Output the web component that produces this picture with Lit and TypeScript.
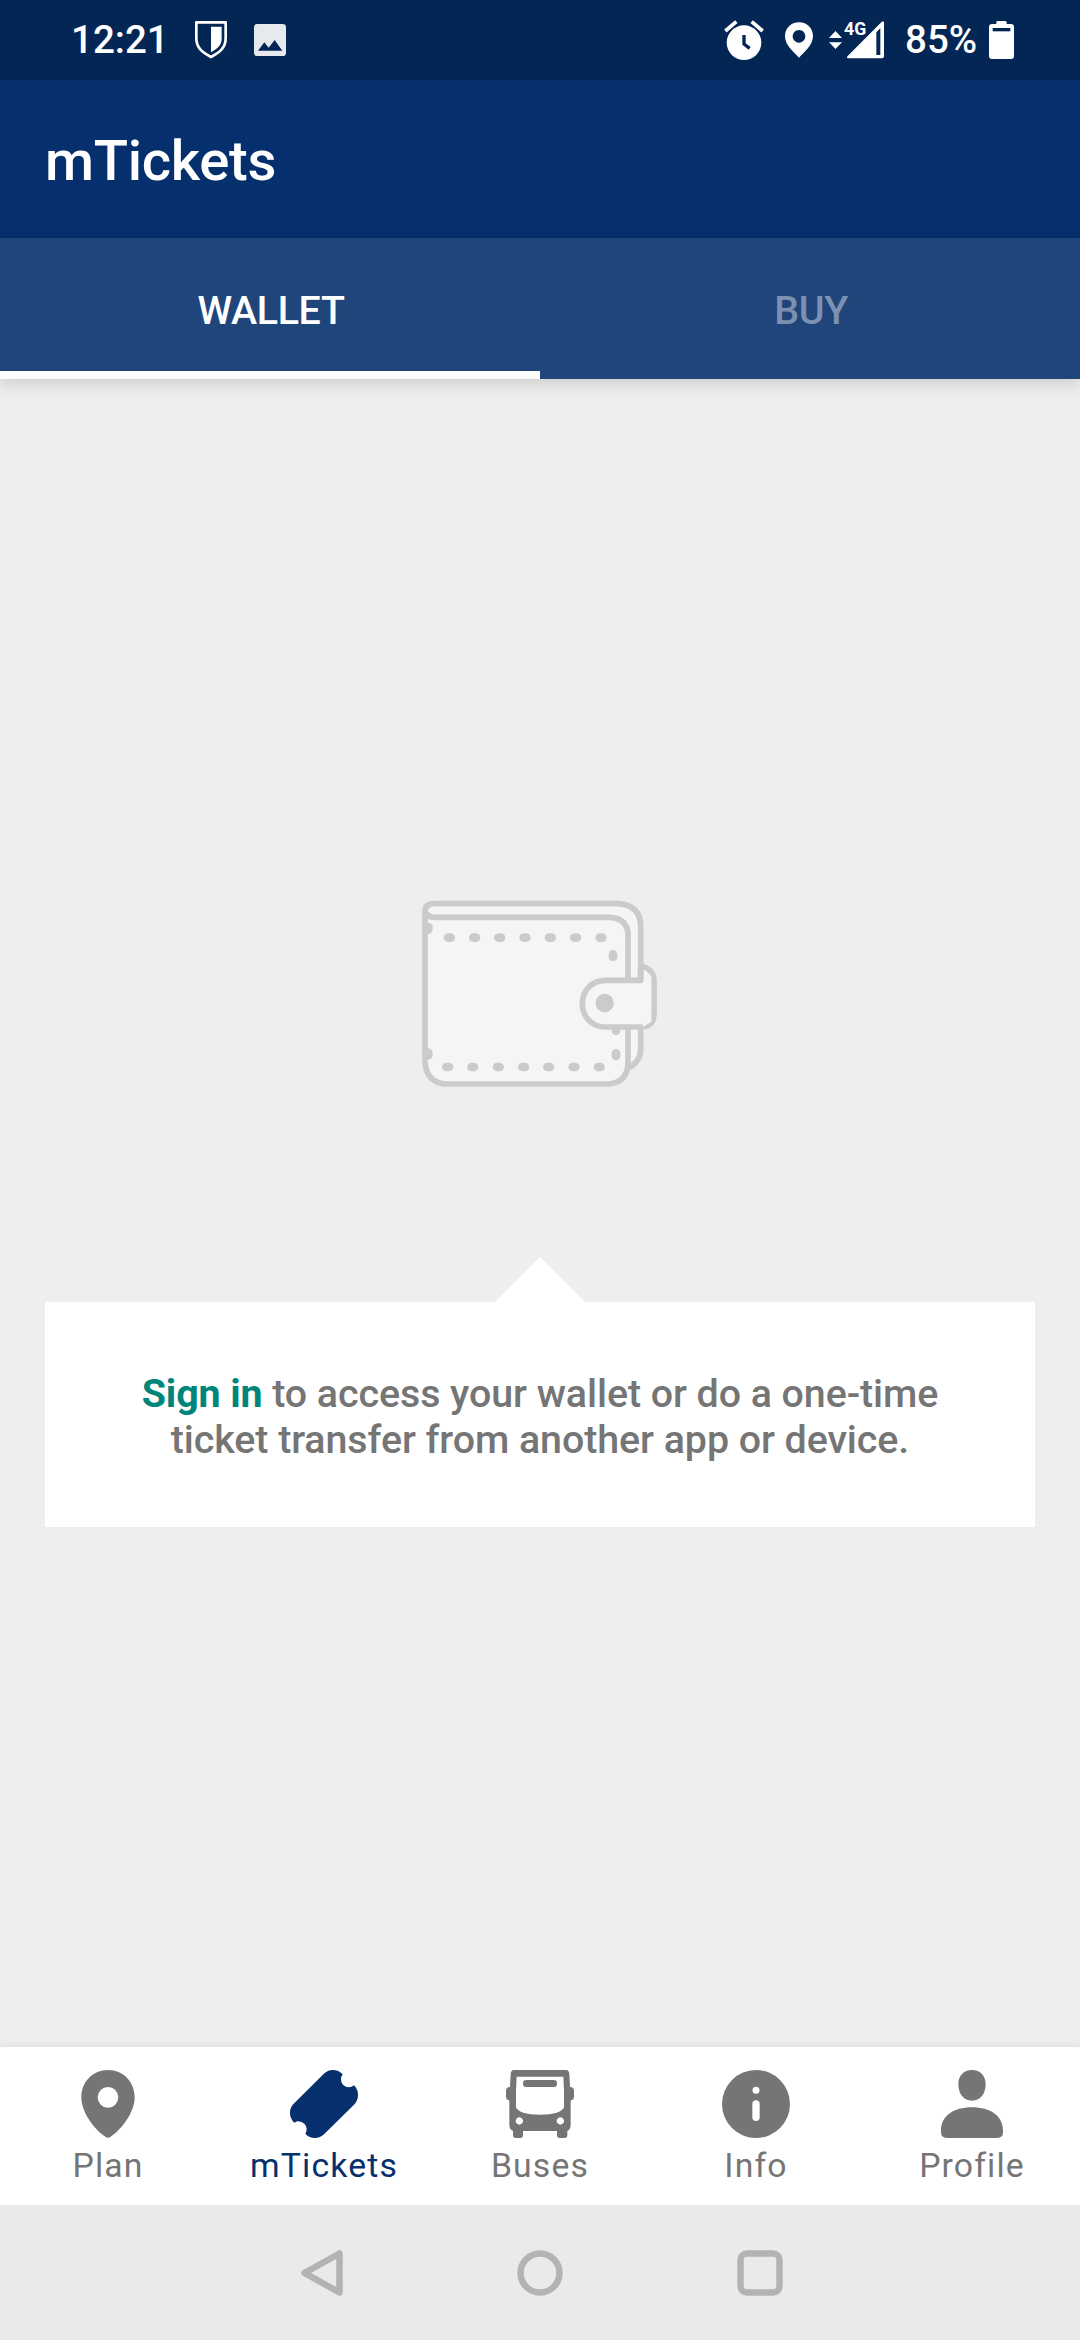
import { LitElement, html, css, svg, TemplateResult } from "lit";
import { customElement, state } from "lit/decorators.js";
import { classMap } from "lit/directives/class-map.js";

const glyph = (box: string, name: string, body: TemplateResult) =>
  html`<svg class=${name} viewBox=${box} aria-hidden="true">${body}</svg>`;

interface NavItem {
  label: string;
  icon: TemplateResult;
}

const pin = svg`<path fill="currentColor" fill-rule="evenodd" d="M102 0C57 0 22 35 22 82C22 125 58 176 95 201Q102 206 109 201C146 176 182 125 182 82C182 35 147 0 102 0ZM102 51A31 31 0 1 1 102 113A31 31 0 1 1 102 51Z"/>`;
const ticket = svg`<path fill="currentColor" d="M101 12Q113 0 128 0Q146 0 158 13A23.8 23.8 0 0 0 192 46Q204 58 204 75Q204 92 192 104L102 193Q91 204 74 204Q58 204 46 191A23.8 23.8 0 0 0 13 158Q0 146 0 128Q0 112 11 101Z"/>`;
const bus = svg`<path fill="currentColor" fill-rule="evenodd" d="M24 0H180Q189 0 190 12L192 51Q204 51 204 63V79Q204 91 194 91V165Q194 178 184 183V196Q184 204 176 204H161Q153 204 153 196V183H51V196Q51 204 43 204H29Q21 204 21 196V183Q10 178 10 165V91Q0 91 0 79V63Q0 51 12 51L14 12Q15 0 24 0ZM32 20L30 62V110C32 125 62 134 102 134C142 134 172 125 174 110V62L172 20ZM40 142a11 11 0 1 0 .1 0ZM163 142a11 11 0 1 0 .1 0Z"/><rect x="51" y="30" width="102" height="21" rx="10" fill="currentColor"/>`;
const info = svg`<circle cx="102" cy="102" r="102" fill="currentColor"/><circle cx="102" cy="61" r="10.5" fill="#fff"/><rect x="91" y="91" width="22" height="62" rx="11" fill="#fff"/>`;
const person = svg`<path fill="currentColor" d="M102 0C127 0 143 18 143 42C143 72 127 92 102 92C77 92 61 72 61 42C61 18 77 0 102 0ZM102 112C158 112 195 138 195 182V187Q195 204 178 204H26Q9 204 9 187V182C9 138 46 112 102 112Z"/>`;

@customElement("app-root")
export class AppRoot extends LitElement {
  @state() private tab = 0;
  @state() private section = 1;

  private tabs = ["WALLET", "BUY"];
  private nav: NavItem[] = [
    { label: "Plan", icon: pin },
    { label: "mTickets", icon: ticket },
    { label: "Buses", icon: bus },
    { label: "Info", icon: info },
    { label: "Profile", icon: person },
  ];

  static styles = css`
    :host {
      display: flex;
      flex-direction: column;
      width: 1080px;
      height: 2340px;
      overflow: hidden;
      background: #eeeeee;
      color: #757575;
      font-family: Roboto, "Noto Sans", sans-serif;
    }
    svg { display: block; flex: none; }
    .status {
      display: flex;
      height: 80px;
      flex: none;
      background: #042654;
      color: #fff;
      font-size: 38.5px;
      font-weight: 500;
      line-height: 80px;
    }
    .clock { padding-left: 71px; width: 124px; }
    .shield { width: 32px; height: 80px; margin-right: 27px; }
    .photo { width: 32px; height: 80px; margin-right: auto; }
    .alarm { width: 40px; height: 80px; margin-right: 21px; }
    .place { width: 28px; height: 80px; margin-right: 16px; }
    .signal { width: 56px; height: 80px; margin-right: 20px; }
    .level { width: 84px; white-space: nowrap; }
    .battery { width: 25px; height: 80px; margin-right: 66px; }
    .title {
      height: 158px;
      flex: none;
      box-sizing: border-box;
      padding-left: 45px;
      background: #05306d;
      color: #fff;
      font-size: 56.25px;
      font-weight: 500;
      line-height: 162px;
      letter-spacing: -0.3px;
    }
    .tabs {
      display: grid;
      grid-template-columns: 1fr 1fr;
      height: 141px;
      flex: none;
      background: #1f457b;
      box-shadow: 0 5px 16px rgba(0, 0, 0, 0.14);
    }
    .tab {
      box-sizing: border-box;
      height: 141px;
      border-bottom: 8px solid transparent;
      color: #7a91b2;
      font-size: 39.375px;
      font-weight: 500;
      line-height: 145px;
      letter-spacing: -0.3px;
      padding-left: 2px;
      text-align: center;
    }
    .tab.on { color: #fff; border-color: #fdfdfd; }
    .content {
      flex: 1;
      display: flex;
      flex-direction: column;
      align-items: center;
      padding: 501px 45px 0;
    }
    .wallet { width: 280px; height: 220px; }
    .pointer { width: 90px; height: 45px; margin-top: 157px; }
    .card {
      width: 990px;
      height: 225px;
      box-sizing: border-box;
      padding-top: 69px;
      background: #fff;
      font-size: 39.375px;
      font-weight: 500;
      line-height: 46px;
      letter-spacing: -0.06px;
      text-align: center;
      white-space: nowrap;
    }
    .link { color: #00857a; font-weight: 700; letter-spacing: -0.1px; }
    .nav {
      display: grid;
      grid-template-columns: repeat(5, 1fr);
      height: 158px;
      flex: none;
      background: #fff;
      box-shadow: 0 -1px 8px rgba(0, 0, 0, 0.07);
    }
    .item {
      display: flex;
      flex-direction: column;
      align-items: center;
      padding-top: 23px;
      font-size: 33.75px;
      line-height: 40px;
      letter-spacing: 1.15px;
    }
    .item.on { color: #05306d; }
    .mark { width: 68px; height: 68px; margin-bottom: 8px; }
    .system {
      display: flex;
      justify-content: center;
      align-items: center;
      gap: 172px;
      height: 135px;
      flex: none;
      background: #eaeaea;
    }
    .key { width: 48px; height: 48px; }
  `;

  render() {
    return html`
      <div class="status">
        <span class="clock">12:21</span>
        ${glyph("465 0 96 240", "shield", svg`<path fill="none" stroke="#fff" stroke-width="8" stroke-linejoin="round" d="M469 67H557V114C557 144 540 156 513 171C486 156 469 144 469 114Z"/><path fill="#fff" d="M513 80H545V114C545 136 535 144 513 157Z"/>`)}
        ${glyph("642 0 96 240", "photo", svg`<rect x="642" y="72" width="96" height="96" rx="10" fill="#e6e9ee"/><path fill="#042654" d="M654 152L673 127L686 143L704 120L727 152Z"/>`)}
        ${glyph("72 0 120 240", "alarm", svg`<circle cx="132" cy="128" r="52" fill="#fff"/><path fill="none" stroke="#fff" stroke-width="11" d="M76 93L109 65M155 65L188 93"/><path fill="none" stroke="#042654" stroke-width="10" d="M132 105V132L149 145"/>`)}
        ${glyph("255 0 84 240", "place", svg`<path fill="#fff" fill-rule="evenodd" d="M297 67C273 67 255 85 255 108C255 136 280 154 297 173C314 154 339 136 339 108C339 85 321 67 297 67ZM297 90a19 19 0 1 1-.1 0Z"/>`)}
        ${glyph("387 0 168 240", "signal", svg`<path fill="#fff" fill-rule="evenodd" d="M387 114L406.500 93L426 114ZM387 127H426L406.500 147ZM444 175Q438 174 443 168L544 67Q552 60 552 70V169Q552 175 546 175ZM529 97V165H541V85Z"/><text x="432" y="105" fill="#fff" font-size="53" font-weight="700">4G</text>`)}
        <span class="level">85%</span>
        ${glyph("867 0 75 240", "battery", svg`<path fill="#fff" d="M889 72V67Q889 63 894 63H915Q920 63 920 67V72H933Q942 72 942 81V168Q942 177 933 177H876Q867 177 867 168V81Q867 72 876 72Z"/><path fill="#042654" d="M878 84H931V94H878Z"/>`)}
      </div>
      <div class="title">mTickets</div>
      <div class="tabs">
        ${this.tabs.map(
          (name, i) => html`<div class=${classMap({ tab: true, on: i === this.tab })} @click=${() => (this.tab = i)}>${name}</div>`
        )}
      </div>
      <div class="content">
        ${glyph("0 0 840 660", "wallet", svg`
          <g fill="#f5f5f5" stroke="#cbcbcb" stroke-width="17" stroke-linejoin="round">
            <path d="M718 258Q762 265 762 302V400Q762 441 722 441H650V258Z"/>
            <path d="M75 96Q75 71 103 71H655Q722 76 722 140V510Q720 547 684 564L600 550V160L90 112Z"/>
            <path d="M75 90V547Q80 607 135 612H628Q684 606 684 547V160Q680 116 632 112H105Q82 112 75 96"/>
          </g>
          <g fill="#cbcbcb">
            ${[148, 224, 299, 375, 451, 527, 603].map((x) => svg`<rect x=${x - 17} y="160" width="34" height="26" rx="14"/>`)}
            ${[143, 218, 295, 371, 446, 522, 598].map((x) => svg`<rect x=${x - 17} y="548" width="34" height="26" rx="14"/>`)}
            <rect x="626" y="210" width="26" height="34" rx="13"/>
            <rect x="635" y="431" width="26" height="34" rx="13"/>
            <rect x="635" y="507" width="26" height="34" rx="13"/>
            <rect x="70" y="128" width="28" height="34" rx="14"/>
            <rect x="70" y="505" width="28" height="34" rx="14"/>
          </g>
          <path fill="#f5f5f5" d="M714 301H615C575 301 547 333 547 371C547 409 575 441 615 441H728L754 425V290L735 270V301Z"/>
          <path fill="none" stroke="#cbcbcb" stroke-width="17" stroke-linejoin="round" d="M722 265V301H615C575 301 547 333 547 371C547 409 575 441 615 441H728"/>
          <circle cx="614" cy="369" r="27.500" fill="#cbcbcb"/>
        `)}
        ${glyph("0 0 90 45", "pointer", svg`<path fill="#fff" d="M0 45L45 0L90 45Z"/>`)}
        <div class="card"><span class="link">Sign in</span> to access your wallet or do a one-time<br />ticket transfer from another app or device.</div>
      </div>
      <div class="nav">
        ${this.nav.map(
          (n, i) => html`<div class=${classMap({ item: true, on: i === this.section })} @click=${() => (this.section = i)}>
            ${glyph("0 0 204 204", "mark", n.icon)}<span>${n.label}</span>
          </div>`
        )}
      </div>
      <div class="system">
        ${glyph("0 0 48 48", "key", svg`<path fill="none" stroke="#b3b3b3" stroke-width="6.500" stroke-linejoin="round" d="M43.500 4.500V43.500L8.500 24Z"/>`)}
        ${glyph("0 0 48 48", "key", svg`<circle cx="24" cy="24" r="19.500" fill="none" stroke="#b3b3b3" stroke-width="6.500"/>`)}
        ${glyph("0 0 48 48", "key", svg`<rect x="4.500" y="4.500" width="39" height="39" rx="6.500" fill="none" stroke="#b3b3b3" stroke-width="6.500"/>`)}
      </div>
    `;
  }
}
